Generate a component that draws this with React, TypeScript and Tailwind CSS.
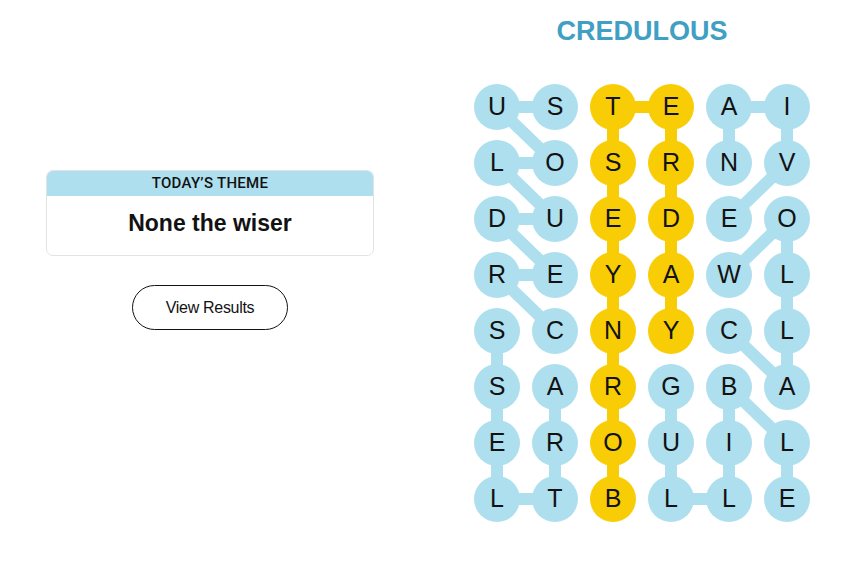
import React from "react";

const GRID = ["USTEAI", "LOSRNV", "DUEDEO", "REYAWL", "SCNYCL", "SARGBA", "EROUIL", "LTBLLE"];

const BLUE = "#aedfee";
const YELLOW = "#f8cd05";

type Seg = [number, number, number, number];

const blueSegs: Seg[] = [
  // CREDULOUS
  [4, 1, 3, 0], [3, 0, 3, 1], [3, 1, 2, 0], [2, 0, 2, 1], [2, 1, 1, 0], [1, 0, 1, 1], [1, 1, 0, 0], [0, 0, 0, 1],
  // ARTLESS
  [5, 1, 6, 1], [6, 1, 7, 1], [7, 1, 7, 0], [7, 0, 6, 0], [6, 0, 5, 0], [5, 0, 4, 0],
  // NAIVE
  [1, 4, 0, 4], [0, 4, 0, 5], [0, 5, 1, 5], [1, 5, 2, 4],
  // CALLOW
  [4, 4, 5, 5], [5, 5, 4, 5], [4, 5, 3, 5], [3, 5, 2, 5], [2, 5, 3, 4],
  // GULLIBLE
  [5, 3, 6, 3], [6, 3, 7, 3], [7, 3, 7, 4], [7, 4, 6, 4], [6, 4, 5, 4], [5, 4, 6, 5], [6, 5, 7, 5],
];

const yellowSegs: Seg[] = [
  [7, 2, 6, 2], [6, 2, 5, 2], [5, 2, 4, 2], [4, 2, 3, 2], [3, 2, 2, 2], [2, 2, 1, 2], [1, 2, 0, 2],
  [0, 2, 0, 3], [0, 3, 1, 3], [1, 3, 2, 3], [2, 3, 3, 3], [3, 3, 4, 3],
];

const isYellow = (r: number, c: number) => c === 2 || (c === 3 && r <= 4);

const px = (c: number) => c * 58 + 23;
const py = (r: number) => r * 56 + 23;

export default function App() {
  return (
    <div className="w-[852px] h-[565px] bg-white flex items-start" style={{ fontFamily: "'Liberation Sans', Arial, sans-serif" }}>
      <div className="ml-[46px] mt-[170px] w-[328px] flex flex-col items-center">
        <div className="w-full rounded-[7px] border border-[#e3e3e3] overflow-hidden">
          <div className="h-[25px] bg-[#aedfee] flex items-center justify-center text-[15px] font-medium tracking-[0.3px] text-[#121212]" style={{ fontFamily: "Roboto, 'Liberation Sans', sans-serif" }}>
            TODAY’S THEME
          </div>
          <div className="h-[59px] flex items-center justify-center pb-[4px] text-[23px] font-bold text-[#121212]">
            None the wiser
          </div>
        </div>
        <button className="mt-[29px] w-[156px] h-[45px] rounded-full border border-[#121212] bg-white text-[16px] tracking-[-0.3px] text-[#121212] flex items-center justify-center">
          View Results
        </button>
      </div>
      <div className="ml-[100px] w-[336px] flex flex-col items-center">
        <div className="mt-[13px] h-[36px] leading-[36px] text-[27px] font-bold text-[#3fa0c3]">
          CREDULOUS
        </div>
        <div className="relative mt-[35px] w-[336px]">
          <svg className="absolute left-0 top-0" width={336} height={438}>
            {blueSegs.map(([r1, c1, r2, c2], i) => (
              <line key={"b" + i} x1={px(c1)} y1={py(r1)} x2={px(c2)} y2={py(r2)} stroke={BLUE} strokeWidth={12} />
            ))}
            {yellowSegs.map(([r1, c1, r2, c2], i) => (
              <line key={"y" + i} x1={px(c1)} y1={py(r1)} x2={px(c2)} y2={py(r2)} stroke={YELLOW} strokeWidth={12} />
            ))}
          </svg>
          <div className="relative grid grid-cols-[repeat(6,46px)] gap-x-[12px] gap-y-[10px]">
            {GRID.map((row, r) =>
              row.split("").map((ch, c) => (
                <div
                  key={r + "-" + c}
                  className={
                    "w-[46px] h-[46px] rounded-full flex items-center justify-center text-[25px] text-[#121212] " +
                    (isYellow(r, c) ? "bg-[#f8cd05]" : "bg-[#aedfee]")
                  }
                >
                  {ch}
                </div>
              ))
            )}
          </div>
        </div>
      </div>
    </div>
  );
}
